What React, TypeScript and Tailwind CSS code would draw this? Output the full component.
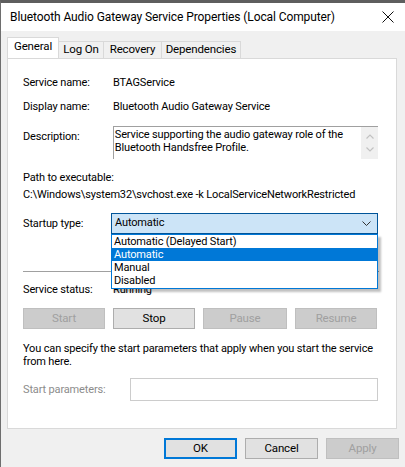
import React from "react";

const font = "font-['Roboto','Liberation_Sans',Arial,sans-serif]";

function Btn({ label, w, disabled, primary }: { label: string; w: string; disabled?: boolean; primary?: boolean }) {
  const base = "h-[21px] flex items-center justify-center text-[11.5px] leading-none";
  const style = disabled
    ? "bg-[#cccccc] border border-[#bfbfbf] text-[#a0a0a0]"
    : primary
    ? "bg-[#e1e1e1] border-2 border-[#0078d7] text-black"
    : "bg-[#e1e1e1] border border-[#adadad] text-black";
  return <div className={`${base} ${style} ${w}`}>{label}</div>;
}

export default function App() {
  return (
    <div className={`w-[405px] h-[467px] bg-[#f0f0f0] border-l border-[#6e6e6e] border-t-[3px] border-t-[#5e5e5e] overflow-hidden text-black ${font} text-[11px] tracking-[-0.15px]`}>
      {/* Title bar */}
      <div className="h-[28px] bg-white flex items-center justify-between pl-[9px] pr-[11px]">
        <span className="text-[12px] tracking-[-0.1px] text-black">Bluetooth Audio Gateway Service Properties (Local Computer)</span>
        <svg width="12" height="12" viewBox="0 0 12 12">
          <path d="M0.5 0.5 L11.5 11.5 M11.5 0.5 L0.5 11.5" stroke="#111" strokeWidth="1" />
        </svg>
      </div>

      {/* Tabs */}
      <div className="pt-[7px] pl-[6px] pr-[7px]">
        <div className="flex items-end h-[20px] relative z-10 text-[11.5px]">
          <div className="h-[21px] w-[52px] bg-white border border-b-0 border-[#d9d9d9] flex items-center justify-center pb-[2px]">General</div>
          <div className="h-[17px] w-[45px] border border-l-0 border-b-0 border-[#d9d9d9] flex items-center justify-center">Log On</div>
          <div className="h-[17px] w-[58px] border border-l-0 border-b-0 border-[#d9d9d9] flex items-center justify-center">Recovery</div>
          <div className="h-[17px] w-[79px] border border-l-0 border-b-0 border-[#d9d9d9] flex items-center justify-center">Dependencies</div>
        </div>

        {/* Panel */}
        <div className="h-[371px] w-[390px] bg-white border border-[#d9d9d9] flex flex-col pl-[15px] pr-[18px]">
          <div className="mt-[17px] flex h-[13px] leading-[13px]">
            <div className="w-[90px]">Service name:</div>
            <div>BTAGService</div>
          </div>
          <div className="mt-[11px] flex h-[13px] leading-[13px]">
            <div className="w-[90px]">Display name:</div>
            <div>Bluetooth Audio Gateway Service</div>
          </div>
          <div className="mt-[13px] flex items-start">
            <div className="w-[90px] pt-[4px] leading-[13px]">Description:</div>
            <div className="w-[266px] h-[33px] border-t border-l border-[#a0a0a0] flex">
              <div className="flex-1 pl-[1px] pt-[1px] leading-[13px]">
                Service supporting the audio gateway role of the
                <br />
                Bluetooth Handsfree Profile.
              </div>
              <div className="w-[17px] bg-[#f0f0f0] flex flex-col items-center justify-around py-[3px]">
                <svg width="8" height="5" viewBox="0 0 8 5">
                  <path d="M0.5 4.5 L4 1 L7.5 4.5" stroke="#c2c2c2" strokeWidth="1.2" fill="none" />
                </svg>
                <svg width="8" height="5" viewBox="0 0 8 5">
                  <path d="M0.5 0.5 L4 4 L7.5 0.5" stroke="#c2c2c2" strokeWidth="1.2" fill="none" />
                </svg>
              </div>
            </div>
          </div>
          <div className="mt-[12px] h-[13px] leading-[13px]">Path to executable:</div>
          <div className="mt-[4px] h-[13px] leading-[13px] whitespace-nowrap">C:\Windows\system32\svchost.exe -k LocalServiceNetworkRestricted</div>

          <div className="mt-[12px] flex items-center">
            <div className="w-[90px] leading-[13px]">Startup type:</div>
            <div className="relative">
              <div className="w-[267px] h-[21px] bg-[#cce4f7] border border-[#005499] flex items-center justify-between pl-[3px] pr-[6px]">
                <span>Automatic</span>
                <svg width="9" height="5" viewBox="0 0 9 5">
                  <path d="M0.5 0.5 L4.5 4.5 L8.5 0.5" stroke="#333" strokeWidth="1" fill="none" />
                </svg>
              </div>
              <div className="absolute left-0 top-[21px] w-[267px] h-[55px] bg-white border border-[#0078d7] shadow-[3px_3px_2px_rgba(0,0,0,0.25)] z-20 flex flex-col">
                <div className="h-[13px] leading-[13px] pl-[2px]">Automatic (Delayed Start)</div>
                <div className="h-[13px] leading-[13px] pl-[2px] bg-[#0078d7] text-white">Automatic</div>
                <div className="h-[13px] leading-[13px] pl-[2px]">Manual</div>
                <div className="h-[13px] leading-[13px] pl-[2px]">Disabled</div>
              </div>
            </div>
          </div>

          <div className="mt-[37px] h-px w-[356px] bg-[#a0a0a0]" />

          <div className="mt-[11px] flex h-[13px] leading-[13px]">
            <div className="w-[90px]">Service status:</div>
            <div>Running</div>
          </div>

          <div className="mt-[12px] flex gap-[8px]">
            <Btn label="Start" w="w-[82px]" disabled />
            <Btn label="Stop" w="w-[82px]" />
            <Btn label="Pause" w="w-[84px]" disabled />
            <Btn label="Resume" w="w-[82px]" disabled />
          </div>

          <div className="mt-[13px] leading-[13px]">
            You can specify the start parameters that apply when you start the service
            <br />
            from here.
          </div>

          <div className="mt-[10px] flex items-center">
            <div className="w-[108px] text-[#8c8c8c] leading-[13px]">Start parameters:</div>
            <div className="w-[249px] h-[23px] border border-[#cccccc] bg-white" />
          </div>
        </div>

        {/* Bottom buttons */}
        <div className="mt-[9px] flex justify-end gap-[8px] -mr-[1px]">
          <Btn label="OK" w="w-[73px]" primary />
          <Btn label="Cancel" w="w-[73px]" />
          <Btn label="Apply" w="w-[73px]" disabled />
        </div>
      </div>
    </div>
  );
}
